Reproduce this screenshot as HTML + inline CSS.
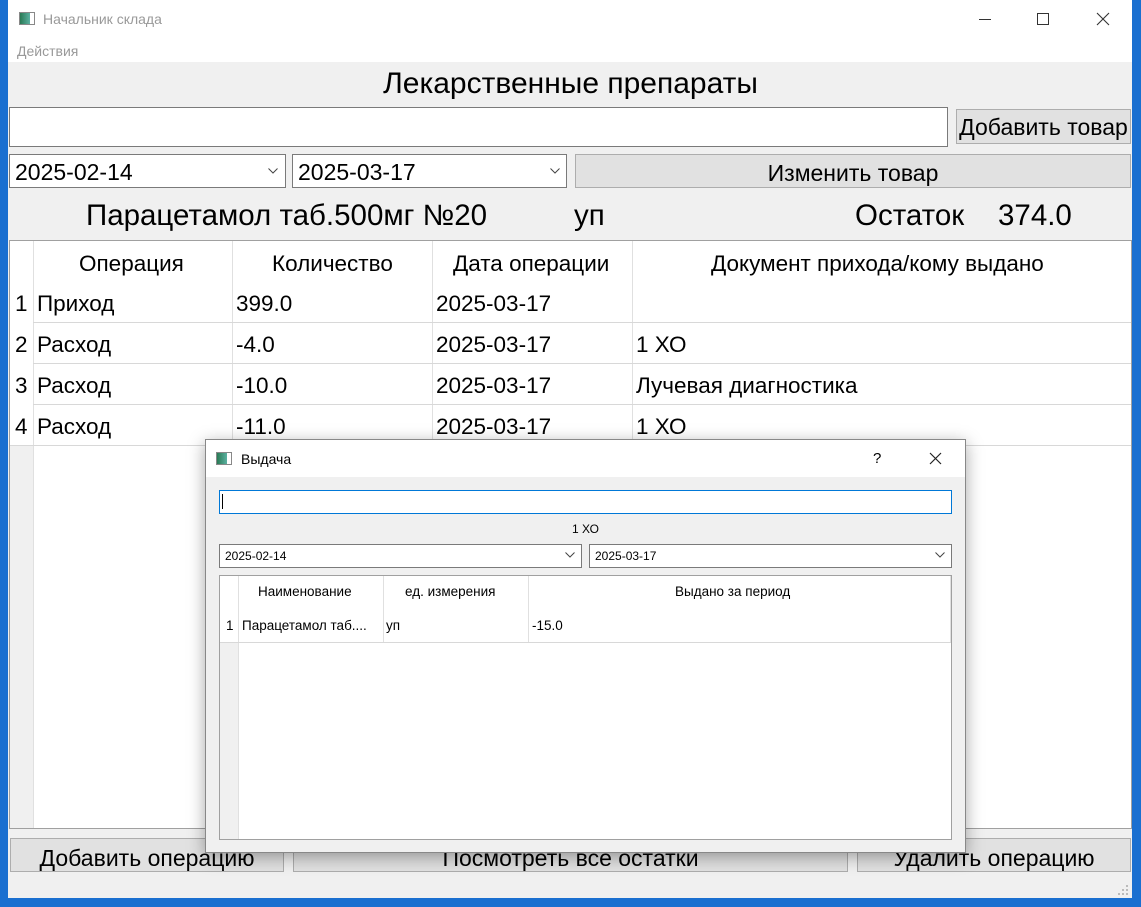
<!DOCTYPE html>
<html><head><meta charset="utf-8"><style>
*{box-sizing:border-box;margin:0;padding:0}
body{width:1141px;height:907px;position:relative;overflow:hidden;background:#1a6fd0;font-family:"Liberation Sans","DejaVu Sans",sans-serif;color:#000}
.a{position:absolute}
.win{left:8px;top:0;width:1124px;height:898px;background:#f0f0f0}
.wt{background:#fff}
.inp{background:#fff;border:1px solid #7a7a7a}
.btn{background:#e1e1e1;border:1px solid #adadad;text-align:center}
.t{white-space:nowrap}
</style></head><body>
<div class="a win"></div>
<div class="a wt" style="left:8px;top:0;width:1124px;height:62px"></div>
<div class="a" style="left:19px;top:12px;width:16px;height:13px;border:1px solid #888;background:linear-gradient(90deg,#2a7a55,#5ab0a0 70%,#fff 70%)"></div>
<div class="a t" style="left:43px;top:11px;font-size:14px;color:#999">Начальник склада</div>
<div class="a t" style="left:17px;top:43px;font-size:14px;color:#999">Действия</div>
<div class="a" style="left:979px;top:19px;width:12px;height:1px;background:#333"></div>
<div class="a" style="left:1037px;top:13px;width:12px;height:12px;border:1px solid #333"></div>
<svg class="a" style="left:1096px;top:12px" width="14" height="14"><path d="M1 1L13 13M13 1L1 13" stroke="#333" stroke-width="1.1"/></svg>

<div class="a t" style="left:0;width:1141px;top:67px;text-align:center;font-size:30px">Лекарственные препараты</div>
<div class="a inp" style="left:9px;top:107px;width:939px;height:40px"></div>
<div class="a btn t" style="left:956px;top:109px;width:175px;height:35px;font-size:23px;line-height:35px">Добавить товар</div>
<div class="a inp t" style="left:9px;top:154px;width:277px;height:34px;font-size:23px;line-height:34px;padding-left:5px">2025-02-14</div>
<svg class="a" style="left:268px;top:168px" width="10" height="6"><path d="M0.5 0.5L5 5L9.5 0.5" fill="none" stroke="#444"/></svg>
<div class="a inp t" style="left:292px;top:154px;width:275px;height:34px;font-size:23px;line-height:34px;padding-left:5px">2025-03-17</div>
<svg class="a" style="left:550px;top:168px" width="10" height="6"><path d="M0.5 0.5L5 5L9.5 0.5" fill="none" stroke="#444"/></svg>
<div class="a btn t" style="left:575px;top:154px;width:556px;height:34px;font-size:23px;line-height:36px">Изменить товар</div>
<div class="a t" style="left:86px;top:199px;font-size:29.5px">Парацетамол таб.500мг №20</div>
<div class="a t" style="left:574px;top:199px;font-size:29.5px">уп</div>
<div class="a t" style="left:855px;top:199px;font-size:29.5px">Остаток</div>
<div class="a t" style="left:998px;top:199px;font-size:29.5px">374.0</div>

<div class="a" style="left:9px;top:240px;width:1123px;height:589px;background:#fff;border:1px solid #a0a0a0"></div>
<div class="a" style="left:10px;top:446px;width:23px;height:382px;background:#f0f0f0"></div>
<div style="font-size:22.5px">
<div class="a t" style="left:79px;top:251px">Операция</div>
<div class="a t" style="left:272px;top:251px">Количество</div>
<div class="a t" style="left:453px;top:251px">Дата операции</div>
<div class="a t" style="left:711px;top:251px">Документ прихода/кому выдано</div>
<div class="a" style="left:232px;top:241px;width:1px;height:204px;background:#e0e0e0"></div>
<div class="a" style="left:432px;top:241px;width:1px;height:204px;background:#e0e0e0"></div>
<div class="a" style="left:632px;top:241px;width:1px;height:204px;background:#e0e0e0"></div>
<div class="a" style="left:33px;top:241px;width:1px;height:587px;background:#e0e0e0"></div>
<div class="a" style="left:33px;top:322px;width:1098px;height:1px;background:#d8d8d8"></div>
<div class="a" style="left:33px;top:363px;width:1098px;height:1px;background:#d8d8d8"></div>
<div class="a" style="left:33px;top:404px;width:1098px;height:1px;background:#d8d8d8"></div>
<div class="a" style="left:10px;top:445px;width:1121px;height:1px;background:#d8d8d8"></div>
<div class="a t" style="left:15px;top:291px">1</div><div class="a t" style="left:37px;top:291px">Приход</div><div class="a t" style="left:236px;top:291px">399.0</div><div class="a t" style="left:436px;top:291px">2025-03-17</div>
<div class="a t" style="left:15px;top:332px">2</div><div class="a t" style="left:37px;top:332px">Расход</div><div class="a t" style="left:236px;top:332px">-4.0</div><div class="a t" style="left:436px;top:332px">2025-03-17</div><div class="a t" style="left:636px;top:332px">1 ХО</div>
<div class="a t" style="left:15px;top:373px">3</div><div class="a t" style="left:37px;top:373px">Расход</div><div class="a t" style="left:236px;top:373px">-10.0</div><div class="a t" style="left:436px;top:373px">2025-03-17</div><div class="a t" style="left:636px;top:373px">Лучевая диагностика</div>
<div class="a t" style="left:15px;top:414px">4</div><div class="a t" style="left:37px;top:414px">Расход</div><div class="a t" style="left:236px;top:414px">-11.0</div><div class="a t" style="left:436px;top:414px">2025-03-17</div><div class="a t" style="left:636px;top:414px">1 ХО</div>
</div>
<div class="a btn t" style="left:10px;top:838px;width:274px;height:34px;font-size:23px;line-height:38px">Добавить операцию</div>
<div class="a btn t" style="left:293px;top:838px;width:555px;height:34px;font-size:23px;line-height:38px">Посмотреть все остатки</div>
<div class="a btn t" style="left:857px;top:838px;width:274px;height:34px;font-size:23px;line-height:38px">Удалить операцию</div>

<!-- dialog -->
<div class="a" style="left:205px;top:439px;width:761px;height:414px;background:#f0f0f0;border:1px solid #888;box-shadow:0 4px 16px rgba(0,0,0,.35)"></div>
<div class="a wt" style="left:206px;top:440px;width:759px;height:37px"></div>
<div class="a" style="left:216px;top:452px;width:16px;height:13px;border:1px solid #888;background:linear-gradient(90deg,#2a7a55,#5ab0a0 70%,#fff 70%)"></div>
<div class="a t" style="left:241px;top:451px;font-size:14px">Выдача</div>
<div class="a t" style="left:873px;top:450px;font-size:15px">?</div>
<svg class="a" style="left:929px;top:452px" width="13" height="13"><path d="M1 1L12 12M12 1L1 12" stroke="#222" stroke-width="1.2"/></svg>
<div class="a" style="left:219px;top:490px;width:733px;height:24px;background:#fff;border:1px solid #0078d7"></div>
<div class="a" style="left:222px;top:494px;width:1px;height:15px;background:#000"></div>
<div class="a t" style="left:205px;width:761px;top:522px;text-align:center;font-size:12px">1 ХО</div>
<div class="a inp t" style="left:219px;top:544px;width:363px;height:24px;font-size:12px;line-height:22px;padding-left:5px">2025-02-14</div>
<svg class="a" style="left:565px;top:552px" width="10" height="6"><path d="M0.5 0.5L5 5L9.5 0.5" fill="none" stroke="#444"/></svg>
<div class="a inp t" style="left:589px;top:544px;width:363px;height:24px;font-size:12px;line-height:22px;padding-left:5px">2025-03-17</div>
<svg class="a" style="left:935px;top:552px" width="10" height="6"><path d="M0.5 0.5L5 5L9.5 0.5" fill="none" stroke="#444"/></svg>
<div class="a" style="left:219px;top:575px;width:733px;height:265px;background:#fff;border:1px solid #a0a0a0"></div>
<div class="a" style="left:220px;top:643px;width:18px;height:196px;background:#f0f0f0"></div>
<div class="a" style="left:238px;top:576px;width:1px;height:263px;background:#e0e0e0"></div>
<div class="a" style="left:383px;top:576px;width:1px;height:66px;background:#e0e0e0"></div>
<div class="a" style="left:528px;top:576px;width:1px;height:66px;background:#e0e0e0"></div>
<div class="a" style="left:950px;top:576px;width:1px;height:66px;background:#e0e0e0"></div>
<div class="a" style="left:220px;top:642px;width:731px;height:1px;background:#d8d8d8"></div>
<div style="font-size:13.5px">
<div class="a t" style="left:258px;top:584px">Наименование</div>
<div class="a t" style="left:405px;top:584px">ед. измерения</div>
<div class="a t" style="left:675px;top:584px">Выдано за период</div>
<div class="a t" style="left:226px;top:618px">1</div>
<div class="a t" style="left:242px;top:618px">Парацетамол таб....</div>
<div class="a t" style="left:386px;top:618px">уп</div>
<div class="a t" style="left:532px;top:618px">-15.0</div>
</div>
<svg class="a" style="left:1118px;top:885px" width="10" height="10" fill="#bbb"><rect x="8" y="0" width="2" height="2"/><rect x="4" y="4" width="2" height="2"/><rect x="8" y="4" width="2" height="2"/><rect x="0" y="8" width="2" height="2"/><rect x="4" y="8" width="2" height="2"/><rect x="8" y="8" width="2" height="2"/></svg>
</body></html>
